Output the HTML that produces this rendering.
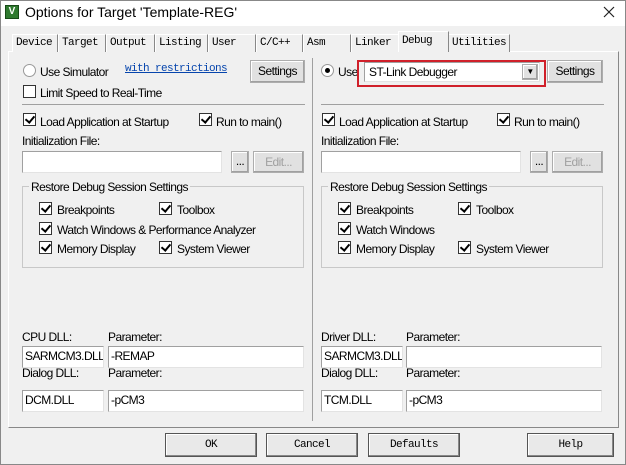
<!DOCTYPE html>
<html><head><style>
*{margin:0;padding:0;box-sizing:border-box}
body{width:626px;height:465px;background:#f0f0f0;font-family:"Liberation Sans",Arial,sans-serif;font-size:12px;letter-spacing:-0.55px;color:#000;position:relative;overflow:hidden}
.a{position:absolute;white-space:nowrap}
.t{margin-top:1px}
.win{position:absolute;left:0;top:0;width:626px;height:465px;border:1px solid #888}
.title{position:absolute;left:1px;top:1px;width:624px;height:25px;background:#fff}
.tab{position:absolute;top:34px;height:18px;border:1px solid #fff;border-right-color:#888;border-bottom:none;font-family:"Liberation Mono",monospace;font-size:11px;letter-spacing:-0.6px;line-height:17px;padding-left:3px;background:#f0f0f0}
.panel{position:absolute;left:8px;top:51px;width:611px;height:377px;border:1px solid #fff;border-right-color:#888;border-bottom-color:#888}
.btn{position:absolute;background:#e1e1e1;border:1px solid #adadad;box-shadow:inset -1px -1px #a0a0a0,inset 1px 1px #fff;text-align:center;line-height:20px}
.mbtn{position:absolute;background:#e9e9e9;border:1px solid #555;box-shadow:inset -1px -1px #888,inset 1px 1px #fff;text-align:center;line-height:22px;font-family:"Liberation Mono",monospace;font-size:11px;letter-spacing:-0.6px}
.inp{position:absolute;background:#fff;border:1px solid #a0a0a0;border-right-color:#e3e3e3;border-bottom-color:#e3e3e3;padding-left:2px;line-height:19px;overflow:hidden}
.cb{position:absolute;width:13px;height:13px;background:#fff;border:1px solid #333}
.cb.k::after{content:"";position:absolute;left:3px;top:0px;width:4px;height:7px;border:solid #000;border-width:0 2px 2px 0;transform:rotate(40deg)}
.rd{position:absolute;width:13px;height:13px;border-radius:50%;background:#fff;border:1px solid #999}
.rd.k::after{content:"";position:absolute;left:3px;top:3px;width:5px;height:5px;border-radius:50%;background:#000}
.grp{position:absolute;border:1px solid #c8c8c8}
.vl{position:absolute;width:1px;background:#a0a0a0}
.hl{position:absolute;height:1px;background:#a0a0a0}
</style></head><body>
<div class="win"></div>
<div class="title"></div>
<div class="a" style="left:5px;top:5px;width:14px;height:14px;background:#2f7a2f;border:1px solid #174a17;color:#fff;font-size:10px;line-height:12px;text-align:center;font-weight:bold;letter-spacing:0">V</div>
<div class="a" style="left:25px;top:4px;font-size:14px;letter-spacing:0">Options for Target 'Template-REG'</div>
<svg class="a" style="left:603px;top:6px" width="12" height="12"><path d="M1 1L11 11M11 1L1 11" stroke="#222" stroke-width="1.2"/></svg>

<div class="panel"></div>
<div class="tab" style="left:12px;width:46px">Device</div>
<div class="tab" style="left:58px;width:48px">Target</div>
<div class="tab" style="left:106px;width:49px">Output</div>
<div class="tab" style="left:155px;width:53px">Listing</div>
<div class="tab" style="left:208px;width:48px">User</div>
<div class="tab" style="left:256px;width:47px">C/C++</div>
<div class="tab" style="left:303px;width:48px">Asm</div>
<div class="tab" style="left:351px;width:48px">Linker</div>
<div class="tab" style="left:448px;width:62px">Utilities</div>
<div class="tab" style="left:398px;top:31px;height:21px;width:51px;border-bottom:none;z-index:2;padding-top:1px">Debug</div>

<div class="vl" style="left:312px;top:58px;height:363px"></div>

<!-- left -->
<div class="rd" style="left:23px;top:64px"></div>
<div class="a t" style="left:40px;top:64px">Use Simulator</div>
<div class="a" style="left:125px;top:63px;font-family:'Liberation Mono',monospace;font-size:11px;letter-spacing:-0.6px;color:#0645ad;text-decoration:underline">with restrictions</div>
<div class="btn" style="left:250px;top:60px;width:55px;height:23px">Settings</div>
<div class="cb" style="left:23px;top:85px"></div>
<div class="a t" style="left:40px;top:85px">Limit Speed to Real-Time</div>
<div class="hl" style="left:22px;top:104px;width:283px"></div>
<div class="cb k" style="left:23px;top:113px"></div>
<div class="a t" style="left:40px;top:114px">Load Application at Startup</div>
<div class="cb k" style="left:199px;top:113px"></div>
<div class="a t" style="left:216px;top:114px">Run to main()</div>
<div class="a t" style="left:22px;top:133px">Initialization File:</div>
<div class="inp" style="left:22px;top:151px;width:200px;height:22px"></div>
<div class="btn" style="left:231px;top:151px;width:18px;height:22px;line-height:18px">...</div>
<div class="btn" style="left:253px;top:151px;width:51px;height:22px;color:#a0a0a0">Edit...</div>
<div class="grp" style="left:22px;top:186px;width:282px;height:82px"></div>
<div class="a t" style="left:29px;top:179px;background:#f0f0f0;padding:0 2px">Restore Debug Session Settings</div>
<div class="cb k" style="left:39px;top:202px"></div><div class="a t" style="left:57px;top:202px">Breakpoints</div>
<div class="cb k" style="left:159px;top:202px"></div><div class="a t" style="left:177px;top:202px">Toolbox</div>
<div class="cb k" style="left:39px;top:222px"></div><div class="a t" style="left:57px;top:222px">Watch Windows &amp; Performance Analyzer</div>
<div class="cb k" style="left:39px;top:241px"></div><div class="a t" style="left:57px;top:241px">Memory Display</div>
<div class="cb k" style="left:159px;top:241px"></div><div class="a t" style="left:177px;top:241px">System Viewer</div>
<div class="a t" style="left:22px;top:329px">CPU DLL:</div>
<div class="a t" style="left:108px;top:329px">Parameter:</div>
<div class="inp" style="left:22px;top:346px;width:82px;height:22px">SARMCM3.DLL</div>
<div class="inp" style="left:108px;top:346px;width:196px;height:22px">-REMAP</div>
<div class="a t" style="left:22px;top:365px">Dialog DLL:</div>
<div class="a t" style="left:108px;top:365px">Parameter:</div>
<div class="inp" style="left:22px;top:390px;width:82px;height:22px">DCM.DLL</div>
<div class="inp" style="left:108px;top:390px;width:196px;height:22px">-pCM3</div>

<!-- right -->
<div class="rd k" style="left:321px;top:64px"></div>
<div class="a t" style="left:338px;top:64px">Use</div>
<div class="a" style="left:357px;top:60px;width:189px;height:27px;border:2px solid #d0202a"></div>
<div class="inp" style="left:364px;top:62px;width:176px;height:20px;line-height:18px;padding-left:4px">ST-Link Debugger</div>
<div class="btn" style="left:522px;top:64px;width:16px;height:16px;line-height:14px;font-size:8px">▼</div>
<div class="btn" style="left:547px;top:60px;width:56px;height:23px">Settings</div>
<div class="hl" style="left:321px;top:104px;width:283px"></div>
<div class="cb k" style="left:322px;top:113px"></div>
<div class="a t" style="left:339px;top:114px">Load Application at Startup</div>
<div class="cb k" style="left:497px;top:113px"></div>
<div class="a t" style="left:514px;top:114px">Run to main()</div>
<div class="a t" style="left:321px;top:133px">Initialization File:</div>
<div class="inp" style="left:321px;top:151px;width:200px;height:22px"></div>
<div class="btn" style="left:530px;top:151px;width:18px;height:22px;line-height:18px">...</div>
<div class="btn" style="left:552px;top:151px;width:51px;height:22px;color:#a0a0a0">Edit...</div>
<div class="grp" style="left:321px;top:186px;width:282px;height:82px"></div>
<div class="a t" style="left:328px;top:179px;background:#f0f0f0;padding:0 2px">Restore Debug Session Settings</div>
<div class="cb k" style="left:338px;top:202px"></div><div class="a t" style="left:356px;top:202px">Breakpoints</div>
<div class="cb k" style="left:458px;top:202px"></div><div class="a t" style="left:476px;top:202px">Toolbox</div>
<div class="cb k" style="left:338px;top:222px"></div><div class="a t" style="left:356px;top:222px">Watch Windows</div>
<div class="cb k" style="left:338px;top:241px"></div><div class="a t" style="left:356px;top:241px">Memory Display</div>
<div class="cb k" style="left:458px;top:241px"></div><div class="a t" style="left:476px;top:241px">System Viewer</div>
<div class="a t" style="left:321px;top:329px">Driver DLL:</div>
<div class="a t" style="left:406px;top:329px">Parameter:</div>
<div class="inp" style="left:321px;top:346px;width:82px;height:22px">SARMCM3.DLL</div>
<div class="inp" style="left:406px;top:346px;width:196px;height:22px"></div>
<div class="a t" style="left:321px;top:365px">Dialog DLL:</div>
<div class="a t" style="left:406px;top:365px">Parameter:</div>
<div class="inp" style="left:321px;top:390px;width:82px;height:22px">TCM.DLL</div>
<div class="inp" style="left:406px;top:390px;width:196px;height:22px">-pCM3</div>

<!-- bottom -->
<div class="mbtn" style="left:165px;top:433px;width:92px;height:24px">OK</div>
<div class="mbtn" style="left:266px;top:433px;width:92px;height:24px">Cancel</div>
<div class="mbtn" style="left:368px;top:433px;width:92px;height:24px">Defaults</div>
<div class="mbtn" style="left:527px;top:433px;width:87px;height:24px">Help</div>
</body></html>
